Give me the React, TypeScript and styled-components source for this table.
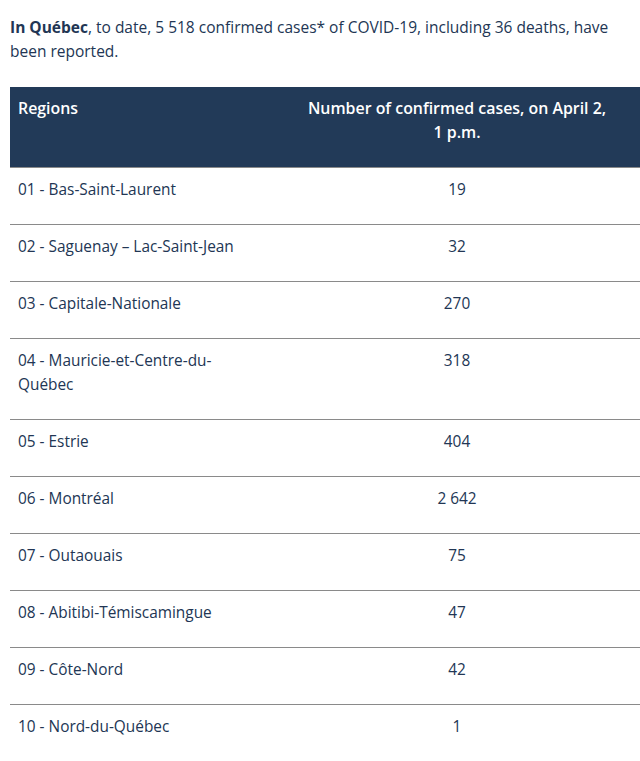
import React from "react";
import styled, { createGlobalStyle } from "styled-components";

const Global = createGlobalStyle`
  html, body { margin: 0; padding: 0; background: #fff; overflow: hidden; }
  body { font-family: "Open Sans", "Liberation Sans", sans-serif; color: #223654; }
`;

const Page = styled.div`
  padding: 15px 0 0 10px;
  width: 630px;
`;

const Intro = styled.p`
  margin: 0 0 24px 0;
  font-size: 15.5px;
  line-height: 24px;
  color: #223654;
  padding-right: 16px;
  strong { font-weight: 700; }
`;

const Table = styled.table`
  width: 630px;
  border-collapse: collapse;
  table-layout: fixed;
  font-size: 15.4px;
  line-height: 24px;
`;

const HeadRow = styled.tr`
  background: #223a58;
  border-bottom: 1px solid #8a8a8a;
`;

const Th = styled.th<{ $center?: boolean }>`
  color: #fff;
  font-weight: 600;
  font-size: 15.9px;
  text-align: ${(p) => (p.$center ? "center" : "left")};
  vertical-align: top;
  padding: ${(p) => (p.$center ? "9px 28px 23px 28px" : "9px 8px 23px 8px")};
`;

const Row = styled.tr`
  border-bottom: 1px solid #8a8a8a;
`;

const Td = styled.td<{ $center?: boolean }>`
  color: #223654;
  text-align: ${(p) => (p.$center ? "center" : "left")};
  vertical-align: top;
  padding: ${(p) => (p.$center ? "10px 8px 22px 8px" : "10px 20px 22px 8px")};
`;

const rows: [string, string][] = [
  ["01 - Bas-Saint-Laurent", "19"],
  ["02 - Saguenay – Lac-Saint-Jean", "32"],
  ["03 - Capitale-Nationale", "270"],
  ["04 - Mauricie-et-Centre-du-Québec", "318"],
  ["05 - Estrie", "404"],
  ["06 - Montréal", "2 642"],
  ["07 - Outaouais", "75"],
  ["08 - Abitibi-Témiscamingue", "47"],
  ["09 - Côte-Nord", "42"],
  ["10 - Nord-du-Québec", "1"],
];

export default function App() {
  return (
    <>
      <Global />
      <Page>
        <Intro>
          <strong>In Québec</strong>, to date, 5 518 confirmed cases* of COVID-19, including 36 deaths, have been reported.
        </Intro>
        <Table>
          <colgroup>
            <col style={{ width: 264 }} />
            <col style={{ width: 366 }} />
          </colgroup>
          <thead>
            <HeadRow>
              <Th>Regions</Th>
              <Th $center>Number of confirmed cases, on April 2, 1{"\u00a0"}p.m.</Th>
            </HeadRow>
          </thead>
          <tbody>
            {rows.map(([r, n]) => (
              <Row key={r}>
                <Td>{r}</Td>
                <Td $center>{n}</Td>
              </Row>
            ))}
          </tbody>
        </Table>
      </Page>
    </>
  );
}
